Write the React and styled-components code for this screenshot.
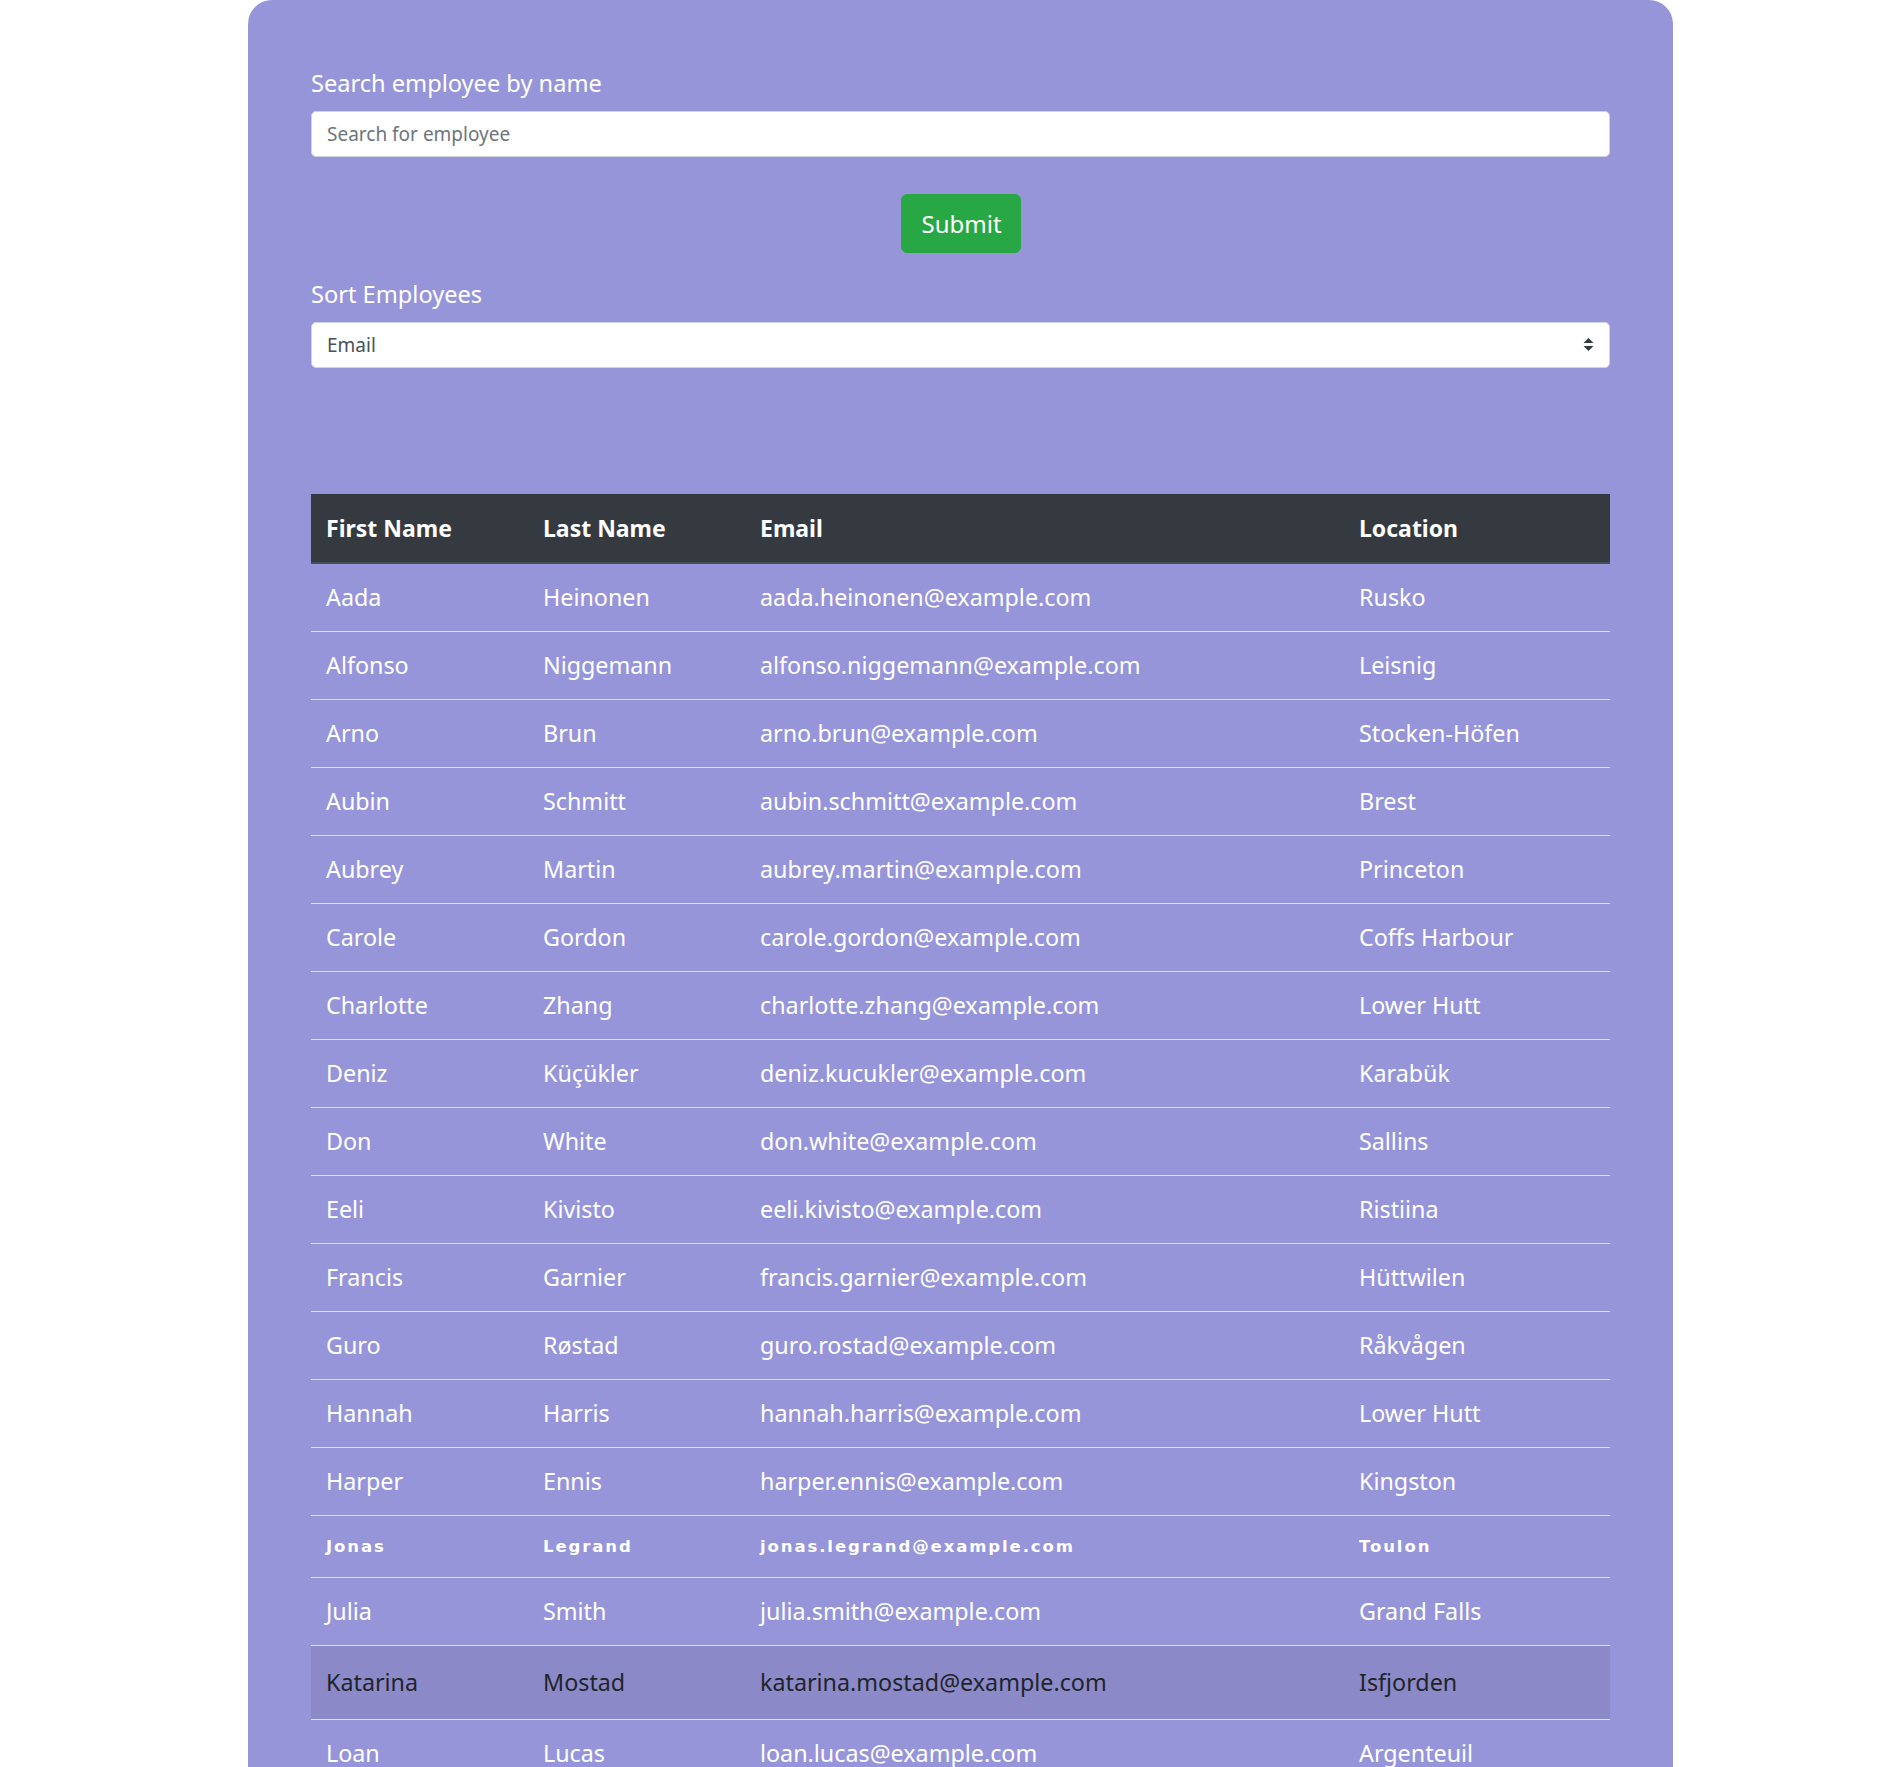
import React from 'react';
import styled, { createGlobalStyle } from 'styled-components';

const GlobalStyle = createGlobalStyle`
  body {
    margin: 0;
    background: #ffffff;
    font-family: "Noto Sans", "Open Sans", sans-serif;
  }
`;

const Page = styled.div`
  padding-left: 248px;
`;

const Panel = styled.div`
  width: 1425px;
  box-sizing: border-box;
  background: #9795d9;
  border-radius: 24px 24px 0 0;
  padding: 65px 63px 40px;
`;

const Field = styled.div`
  display: flex;
  flex-direction: column;
`;

const Label = styled.label`
  color: #ffffff;
  font-size: 23.6px;
  line-height: 36px;
  margin-bottom: 10px;
`;

const TextInput = styled.input`
  box-sizing: border-box;
  height: 46px;
  padding: 7px 15px;
  border: 1px solid #ced4da;
  border-radius: 5px;
  font-family: inherit;
  font-size: 19px;
  color: #495057;
  background: #ffffff;

  &::placeholder {
    color: #6c757d;
  }
`;

const ButtonRow = styled.div`
  display: flex;
  justify-content: center;
  margin: 37px 0 23px;
`;

const SubmitButton = styled.button`
  height: 59px;
  width: 120px;
  padding: 0 20px;
  border: 1px solid #28a745;
  border-radius: 6px;
  background: #28a745;
  color: #ffffff;
  font-family: inherit;
  font-size: 24px;
  cursor: pointer;
`;

const SelectWrap = styled.div`
  position: relative;
`;

const Select = styled.select`
  appearance: none;
  width: 100%;
  box-sizing: border-box;
  height: 46px;
  padding: 7px 40px 7px 15px;
  border: 1px solid #ced4da;
  border-radius: 5px;
  background: #ffffff;
  font-family: inherit;
  font-size: 19px;
  color: #495057;
`;

const Arrow = styled.svg`
  position: absolute;
  right: 16px;
  top: 16px;
  pointer-events: none;
`;

const Table = styled.table`
  margin-top: 126px;
  width: 100%;
  border-collapse: collapse;
  table-layout: fixed;
  color: #ffffff;
  font-size: 23.3px;
`;

const HeadCell = styled.th`
  box-sizing: border-box;
  width: ${(p) => p.$w}px;
  text-align: left;
  background: #343a40;
  color: #ffffff;
  font-size: 23px;
  font-weight: 700;
  padding: 15px 15px;
  line-height: 38px;
  border-bottom: 2px solid #454d55;
`;

const Row = styled.tr`
  background: ${(p) => (p.$hover ? 'rgba(0, 0, 0, 0.075)' : 'transparent')};
  color: ${(p) => (p.$hover ? '#212529' : '#ffffff')};
`;

const Cell = styled.td`
  padding: ${(p) => (p.$hover ? '18px' : '15px')} 15px;
  line-height: 37px;
  border-top: 1px solid #dee2e6;
  white-space: nowrap;
`;

const OddCell = styled.td`
  padding: 15px 15px;
  line-height: 31px;
  border-top: 1px solid #dee2e6;
  font-family: "DejaVu Sans", sans-serif;
  font-weight: 700;
  font-size: 16.5px;
  letter-spacing: 1.9px;
  white-space: nowrap;
`;

const employees = [
  ['Aada', 'Heinonen', 'aada.heinonen@example.com', 'Rusko'],
  ['Alfonso', 'Niggemann', 'alfonso.niggemann@example.com', 'Leisnig'],
  ['Arno', 'Brun', 'arno.brun@example.com', 'Stocken-Höfen'],
  ['Aubin', 'Schmitt', 'aubin.schmitt@example.com', 'Brest'],
  ['Aubrey', 'Martin', 'aubrey.martin@example.com', 'Princeton'],
  ['Carole', 'Gordon', 'carole.gordon@example.com', 'Coffs Harbour'],
  ['Charlotte', 'Zhang', 'charlotte.zhang@example.com', 'Lower Hutt'],
  ['Deniz', 'Küçükler', 'deniz.kucukler@example.com', 'Karabük'],
  ['Don', 'White', 'don.white@example.com', 'Sallins'],
  ['Eeli', 'Kivisto', 'eeli.kivisto@example.com', 'Ristiina'],
  ['Francis', 'Garnier', 'francis.garnier@example.com', 'Hüttwilen'],
  ['Guro', 'Røstad', 'guro.rostad@example.com', 'Råkvågen'],
  ['Hannah', 'Harris', 'hannah.harris@example.com', 'Lower Hutt'],
  ['Harper', 'Ennis', 'harper.ennis@example.com', 'Kingston'],
  ['Jonas', 'Legrand', 'jonas.legrand@example.com', 'Toulon', 'odd'],
  ['Julia', 'Smith', 'julia.smith@example.com', 'Grand Falls'],
  ['Katarina', 'Mostad', 'katarina.mostad@example.com', 'Isfjorden', 'hover'],
  ['Loan', 'Lucas', 'loan.lucas@example.com', 'Argenteuil'],
];

const columns = [
  ['First Name', 217],
  ['Last Name', 217],
  ['Email', 599],
  ['Location', 266],
];

const App = () => {
  return (
    <Page>
      <GlobalStyle />
      <Panel>
        <Field>
          <Label htmlFor="search">Search employee by name</Label>
          <TextInput id="search" type="text" placeholder="Search for employee" />
        </Field>
        <ButtonRow>
          <SubmitButton type="button">Submit</SubmitButton>
        </ButtonRow>
        <Field>
          <Label htmlFor="sort">Sort Employees</Label>
          <SelectWrap>
            <Select id="sort" defaultValue="email">
              <option value="first">First Name</option>
              <option value="last">Last Name</option>
              <option value="email">Email</option>
              <option value="location">Location</option>
            </Select>
            <Arrow width="11" height="13" viewBox="0 0 11 13">
              <path d="M5.5 0 L10.5 5 H0.5 Z" fill="#343a40" />
              <path d="M5.5 13 L10.5 8 H0.5 Z" fill="#343a40" />
            </Arrow>
          </SelectWrap>
        </Field>
        <Table>
          <thead>
            <tr>
              {columns.map(([name, w]) => (
                <HeadCell key={name} $w={w}>{name}</HeadCell>
              ))}
            </tr>
          </thead>
          <tbody>
            {employees.map(([first, last, email, loc, kind]) =>
              kind === 'odd' ? (
                <Row key={email}>
                  <OddCell>{first}</OddCell>
                  <OddCell>{last}</OddCell>
                  <OddCell>{email}</OddCell>
                  <OddCell>{loc}</OddCell>
                </Row>
              ) : (
                <Row key={email} $hover={kind === 'hover'}>
                  <Cell $hover={kind === 'hover'}>{first}</Cell>
                  <Cell $hover={kind === 'hover'}>{last}</Cell>
                  <Cell $hover={kind === 'hover'}>{email}</Cell>
                  <Cell $hover={kind === 'hover'}>{loc}</Cell>
                </Row>
              )
            )}
          </tbody>
        </Table>
      </Panel>
    </Page>
  );
};

export default App;
